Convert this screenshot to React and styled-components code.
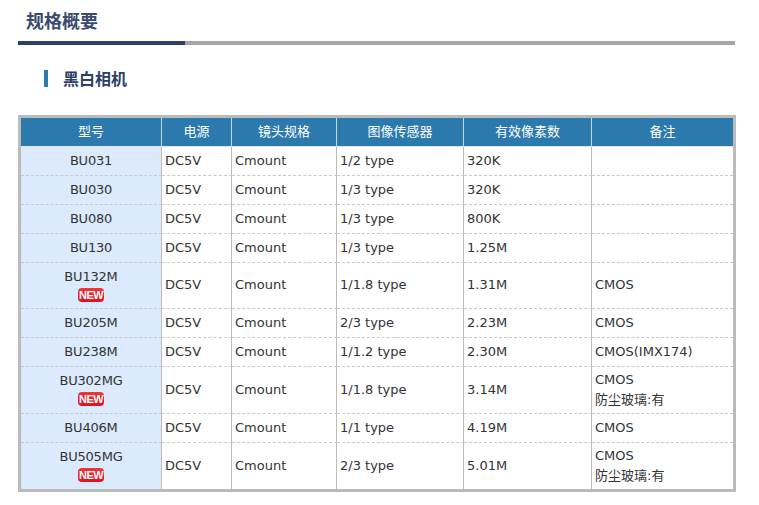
import React from 'react';
import styled, { createGlobalStyle } from 'styled-components';

const Global = createGlobalStyle`
  html, body { margin: 0; padding: 0; background: #fff; }
  body { font-family: "DejaVu Sans", "Noto Sans CJK SC", sans-serif; color: #333; }
`;
const Page = styled.div`
  width: 717px;
  margin-left: 18px;
  padding-top: 8px;
`;
const Title = styled.h2`
  margin: 0;
  height: 33px;
  padding-left: 8px;
  font: 700 18px/24px "Noto Sans CJK SC", sans-serif;
  color: #3a4a6e;
  border-bottom: 4px solid #a6a6a6;
  position: relative;
  &::after {
    content: "";
    position: absolute;
    left: 0;
    bottom: -4px;
    width: 167px;
    height: 4px;
    background: #2d4069;
  }
`;
const SubTitle = styled.h3`
  margin: 25px 0 0 26px;
  height: 17px;
  padding-left: 15px;
  border-left: 4px solid #2b79ad;
  font: 700 16px/16px "Noto Sans CJK SC", sans-serif;
  color: #2d3f66;
`;
const Table = styled.table`
  margin-top: 28px;
  width: 717px;
  table-layout: fixed;
  border-collapse: separate;
  border-spacing: 0;
  border: 3px solid #bbbbbb;
  font-size: 13px;
`;
const Head = styled.th`
  height: 25px;
  padding: 0 0 3px;
  background: #2b79ad;
  color: #fff;
  font: 400 13px/17px "Noto Sans CJK SC", sans-serif;
  text-align: center;
  border-right: 1px solid #c3d9e6;
  &:last-child { border-right: 0; }
`;
const Cell = styled.td`
  padding: 0 3px 1px;
  height: ${(p) => p.$h - 2}px;
  line-height: 20px;
  vertical-align: middle;
  border-right: 1px solid #bbbbbb;
  border-top: 1px dashed #c8c8c8;
  &:last-child { border-right: 0; }
  tr:first-child > & { border-top: 1px solid #e4e8ec; }
`;
const Model = styled(Cell)`
  padding: 0 0 1px;
  background: #dbeafc;
  text-align: center;
  line-height: 19px;
  letter-spacing: -0.2px;
`;
const NewBadge = styled.span`
  display: block;
  width: 26px;
  height: 14px;
  margin: 2px auto 2px;
  border-radius: 4px;
  background: linear-gradient(#f0353a, #dc1420);
  color: #fff;
  font: 700 11px/14px "Liberation Sans", sans-serif;
  text-align: center;
  letter-spacing: -0.6px;
`;
const Note = styled.span`
  display: block;
`;

const rows = [
  ['BU031', '1/2 type', '320K', [], 29],
  ['BU030', '1/3 type', '320K', [], 29],
  ['BU080', '1/3 type', '800K', [], 29],
  ['BU130', '1/3 type', '1.25M', [], 29],
  ['BU132M', '1/1.8 type', '1.31M', ['CMOS'], 46, true],
  ['BU205M', '2/3 type', '2.23M', ['CMOS'], 29],
  ['BU238M', '1/1.2 type', '2.30M', ['CMOS(IMX174)'], 29],
  ['BU302MG', '1/1.8 type', '3.14M', ['CMOS', '防尘玻璃:有'], 47, true],
  ['BU406M', '1/1 type', '4.19M', ['CMOS'], 29],
  ['BU505MG', '2/3 type', '5.01M', ['CMOS', '防尘玻璃:有'], 47, true],
];
const widths = [141, 70, 105, 127, 128, 141];
const heads = ['型号', '电源', '镜头规格', '图像传感器', '有效像素数', '备注'];

export default function App() {
  return (
    <Page>
      <Global />
      <Title>规格概要</Title>
      <SubTitle>黑白相机</SubTitle>
      <Table>
        <colgroup>
          {widths.map((w, i) => <col key={i} width={w} />)}
        </colgroup>
        <thead>
          <tr>{heads.map((h) => <Head key={h}>{h}</Head>)}</tr>
        </thead>
        <tbody>
          {rows.map(([m, s, p, notes, h, isNew]) => (
            <tr key={m}>
              <Model $h={h}>
                {m}
                {isNew && <NewBadge>NEW</NewBadge>}
              </Model>
              <Cell $h={h}>DC5V</Cell>
              <Cell $h={h}>Cmount</Cell>
              <Cell $h={h}>{s}</Cell>
              <Cell $h={h}>{p}</Cell>
              <Cell $h={h}>{notes.map((n) => <Note key={n}>{n}</Note>)}</Cell>
            </tr>
          ))}
        </tbody>
      </Table>
    </Page>
  );
}
